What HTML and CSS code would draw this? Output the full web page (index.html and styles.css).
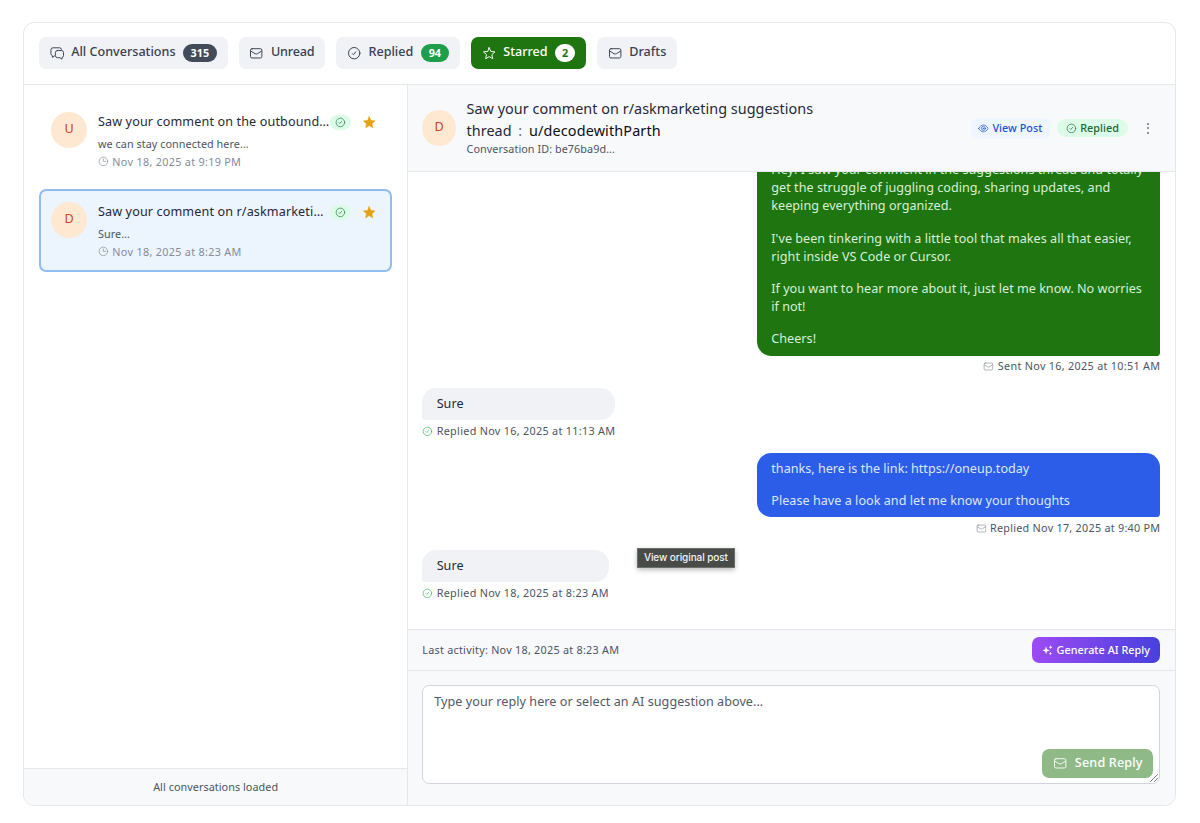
FILE: index.html
```html
<!DOCTYPE html>
<html lang="en">
<head>
<meta charset="utf-8">
<title>Conversations</title>
<link rel="stylesheet" href="styles.css">
</head>
<body>
<svg class="sprite" aria-hidden="true">
  <symbol id="mail" viewBox="0 0 24 24"><rect x="2.500" y="4.500" width="19" height="15.500" rx="2.500"/><path d="M3 8.500 10 12.800q2 1.200 4 0l7-4.300"/></symbol>
  <symbol id="check" viewBox="0 0 24 24"><circle cx="12" cy="12" r="9.500"/><path d="m9 12.700 1.700 1.800 4-4.800"/></symbol>
  <symbol id="clock" viewBox="0 0 24 24"><circle cx="12" cy="12" r="9.500"/><path d="M12 6.500V12h5"/></symbol>
  <symbol id="star" viewBox="0 0 24 24"><path d="m12 2.800 2.800 6.300 6.700.7-5 4.600 1.400 6.800-5.900-3.500-5.900 3.500 1.400-6.800-5-4.600 6.700-.7z"/></symbol>
  <symbol id="chat" viewBox="0 0 24 24"><path d="M19 6.500V6a3 3 0 0 0-3-3H5a3.500 3.500 0 0 0-3.500 3.500v6A3.500 3.500 0 0 0 4 16v3l3.500-2.500"/><path d="M12.500 7.500H19a3.500 3.500 0 0 1 3.500 3.500v5a3.500 3.500 0 0 1-2.500 3.300V22l-3.500-2.500h-4A3.500 3.500 0 0 1 9 16v-5a3.500 3.500 0 0 1 3.500-3.500z"/></symbol>
  <symbol id="eye" viewBox="0 0 24 24"><path d="M1.500 12C4 7 8 4.500 12 4.500S20 7 22.500 12C20 17 16 19.500 12 19.500S4 17 1.500 12z"/><circle cx="12" cy="12" r="4.500"/><circle cx="12" cy="12" r="1"/></symbol>
  <symbol id="spark" viewBox="0 0 24 24"><path d="M9 4.500 11 10l5.500 2-5.500 2-2 5.500L7 14l-5.500-2L7 10z"/><path d="m19 1.500 1 2.500 2.500 1-2.500 1-1 2.500L18 6l-2.500-1L18 4zM18.500 16l.9 2.100 2.100.9-2.100.9-.9 2.100-.9-2.100-2.100-.9 2.100-.9z"/></symbol>
</svg>
<main class="card">
  <nav class="tabs">
    <button class="tab"><svg class="icon"><use href="#chat"/></svg><span class="label">All Conversations</span><b class="count dark">315</b></button>
    <button class="tab tight"><svg class="icon"><use href="#mail"/></svg><span class="label">Unread</span></button>
    <button class="tab"><svg class="icon"><use href="#check"/></svg><span class="label">Replied</span><b class="count green">94</b></button>
    <button class="tab active"><svg class="icon"><use href="#star"/></svg><span class="label">Starred</span><b class="count white">2</b></button>
    <button class="tab"><svg class="icon"><use href="#mail"/></svg><span class="label">Drafts</span></button>
  </nav>
  <div class="body">
    <aside class="side">
      <div class="list">
        <article class="item">
          <div class="avatar">U</div>
          <div class="info">
            <div class="row"><h3>Saw your comment on the outbound…</h3><span class="ok"><svg><use href="#check"/></svg></span><svg class="fav"><use href="#star"/></svg></div>
            <p class="snippet">we can stay connected here...</p>
            <p class="date"><svg><use href="#clock"/></svg><span class="stamp">Nov 18, 2025 at 9:19 PM</span></p>
          </div>
        </article>
        <article class="item selected">
          <div class="avatar">D</div>
          <div class="info">
            <div class="row"><h3>Saw your comment on r/askmarketi…</h3><span class="ok"><svg><use href="#check"/></svg></span><svg class="fav"><use href="#star"/></svg></div>
            <p class="snippet">Sure...</p>
            <p class="date"><svg><use href="#clock"/></svg><span class="stamp">Nov 18, 2025 at 8:23 AM</span></p>
          </div>
        </article>
      </div>
      <footer class="loaded">All conversations loaded</footer>
    </aside>
    <section class="thread">
      <header class="head">
        <div class="avatar narrow">D</div>
        <div class="heading">
          <h2>Saw your comment on r/askmarketing suggestions<br>thread <i>:</i> <span class="user">u/decodewithParth</span></h2>
          <p>Conversation ID: be76ba9d...</p>
        </div>
        <div class="actions">
          <a class="pill view"><svg><use href="#eye"/></svg><span>View Post</span></a>
          <span class="pill replied"><svg><use href="#check"/></svg><span>Replied</span></span>
          <span class="more"><i></i><i></i><i></i></span>
        </div>
      </header>
      <div class="messages">
        <div class="msg out">
          <div class="bubble"><p>Hey! I saw your comment in the suggestions thread and totally<br>get the struggle of juggling coding, sharing updates, and<br>keeping everything organized.</p><p>I've been tinkering with a little tool that makes all that easier,<br>right inside VS Code or Cursor.</p><p class="dense">If you want to hear more about it, just let me know. No worries<br>if not!</p><p>Cheers!</p></div>
          <div class="meta"><svg><use href="#mail"/></svg><span class="stamp">Sent Nov 16, 2025 at 10:51 AM</span></div>
        </div>
        <div class="msg in">
          <div class="bubble">Sure</div>
          <div class="meta"><svg><use href="#check"/></svg><span class="stamp">Replied Nov 16, 2025 at 11:13 AM</span></div>
        </div>
        <div class="msg out blue">
          <div class="bubble"><p class="dense">thanks, here is the link: https://oneup.today</p><p>Please have a look and let me know your thoughts</p></div>
          <div class="meta"><svg><use href="#mail"/></svg><span class="stamp snug">Replied Nov 17, 2025 at 9:40 PM</span></div>
        </div>
        <div class="msg in">
          <div class="bubble">Sure</div>
          <div class="meta"><svg><use href="#check"/></svg><span class="stamp">Replied Nov 18, 2025 at 8:23 AM</span></div>
        </div>
        <div class="tooltip">View original post</div>
      </div>
      <div class="activity"><span class="last">Last activity: Nov 18, 2025 at 8:23 AM</span><button class="generate"><svg><use href="#spark"/></svg><span>Generate AI Reply</span></button></div>
      <div class="composer">
        <div class="field">Type your reply here or select an AI suggestion above...
          <button class="send"><svg><use href="#mail"/></svg><span>Send Reply</span></button>
          <svg class="grip" viewBox="0 0 8 8"><path d="M.5 7.500l7-7M4.500 7.500l3-3"/></svg>
        </div>
      </div>
    </section>
  </div>
</main>
</body>
</html>
```
FILE: styles.css
```css
* { box-sizing: border-box; margin: 0; padding: 0; }
body { width: 1200px; height: 823px; padding: 22px 24.200px 17px 23.400px; background: #fff; overflow: hidden; font: 12.6px/18px "Noto Sans", "Open Sans", sans-serif; color: #1f2937; }
svg { fill: none; stroke: currentColor; stroke-width: 1.5; stroke-linecap: round; stroke-linejoin: round; flex: none; display: block; width: 10.8px; height: 10.8px; }
.sprite { position: absolute; width: 0; height: 0; }
button { font: inherit; border: 0; white-space: nowrap; }
h2, h3 { font-weight: 400; }
.card { height: 784px; display: flex; flex-direction: column; border: 1px solid #e5e7eb; border-radius: 11px; overflow: hidden; }
.tabs { height: 62px; flex: none; display: flex; gap: 10.800px; padding: 14.400px; border-bottom: 1px solid #e5e7eb; }
.tab { height: 32px; display: flex; align-items: center; padding: 0 10.800px; border-radius: 7.200px; background: #f1f2f6; color: #374151; font-weight: 500; }
.tab .icon { width: 14.400px; height: 14.400px; margin-right: 7.200px; stroke-width: 1.6; }
.label { padding-bottom: 2px; }
.tight { letter-spacing: -.17px; }
.tab.active { background: #1f7611; color: #fff; }
.count { margin-left: 7.200px; height: 18px; padding: 0 7.900px; border-radius: 9px; font-size: 10.800px; font-weight: 700; line-height: 17px; color: #fff; }
.dark { background: #414b5a; }
.green { background: #1f9d49; padding: 0 8.200px; }
.count.white { background: #fff; color: #1f7611; padding: 0 7.200px; }
.body { flex: 1; min-height: 0; display: flex; }
.side { width: 383.500px; flex: none; display: flex; flex-direction: column; border-right: 1px solid #e5e7eb; }
.list { flex: 1; padding: 14.400px 15px 0 14.400px; display: flex; flex-direction: column; gap: 7.200px; }
.item { height: 82.800px; flex: none; display: flex; gap: 10.800px; padding: 10.400px; border: 2px solid transparent; border-radius: 7.200px; }
.selected { background: #ecf4fe; border-color: #8fbdf3; }
.avatar { width: 36px; height: 36px; flex: none; border-radius: 50%; background: #ffe8d2; color: #d0401c; display: grid; place-items: center; padding-bottom: 1px; }
.narrow { width: 33.500px; padding-bottom: 2px; }
.info { flex: 1; min-width: 0; }
.row { display: flex; align-items: center; height: 21px; }
.row h3 { font-size: 12.600px; letter-spacing: .125px; white-space: nowrap; flex: 0 0 232px; padding-bottom: .400px; }
.ok { width: 21px; height: 15px; border-radius: 8px; background: #dcfce7; color: #1c7a40; display: grid; place-items: center; }
.fav { width: 14.400px; height: 14.400px; margin-left: 11px; color: #e6a10e; fill: #e6a10e; stroke-width: 1; }
.snippet { font-size: 10.800px; letter-spacing: .06px; color: #4b5563; height: 18px; margin-top: 2.500px; }
.date { font-size: 10.800px; color: #858c99; height: 18px; display: flex; align-items: center; gap: 3.600px; margin-top: -.500px; }
.stamp { letter-spacing: .31px; }
.snug { letter-spacing: .266px; }
.loaded { height: 37px; border-top: 1px solid #e5e7eb; background: #f8f9fb; display: grid; place-items: center; font-size: 10.800px; letter-spacing: .06px; color: #4b5563; }
.thread { flex: 1; min-width: 0; display: flex; flex-direction: column; }
.head { height: 87px; flex: none; display: flex; align-items: center; padding: 0 14.400px; background: #f8f9fb; border-bottom: 1px solid #e5e7eb; }
.heading { flex: 1; margin-left: 10.800px; padding-bottom: 1px; }
.heading h2 { font-size: 14.400px; line-height: 21.600px; letter-spacing: .033px; }
.heading i { font-style: normal; color: #6b7280; margin: 0 3px; }
.user { color: #0b0f17; letter-spacing: .14px; }
.heading p { font-size: 10.800px; line-height: 14.400px; letter-spacing: .07px; color: #4b5563; margin-top: 1px; }
.actions { display: flex; align-items: center; margin-right: 5px; }
.pill { height: 18px; display: flex; align-items: center; gap: 3.600px; padding: 0 9px; border-radius: 9px; font-size: 10.800px; font-weight: 500; letter-spacing: .05px; }
.view { height: 21px; border-radius: 7px; padding: 0 7.200px; background: #eff6ff; color: #2450d8; margin-right: 7.200px; }
.replied { background: #dcfce7; color: #17663a; }
.pill span { padding-bottom: 1px; }
.more { width: 14.400px; margin-left: 13px; display: flex; flex-direction: column; align-items: center; gap: 2.500px; }
.more i { width: 2px; height: 2px; border-radius: 1px; background: #6b7280; }
.messages { flex: 1; min-height: 0; overflow: hidden; position: relative; display: flex; flex-direction: column; justify-content: flex-end; gap: 14.400px; padding: 0 14.400px 28.800px; }
.msg { flex: none; display: flex; flex-direction: column; align-self: flex-start; }
.out { align-self: flex-end; width: 403.500px; }
.bubble { padding: 7.200px 14.400px; border-radius: 14.400px 14.400px 14.400px 3.600px; background: #f1f2f6; white-space: nowrap; letter-spacing: .028px; }
.dense { letter-spacing: 0; }
.out .bubble { border-radius: 14.400px 14.400px 3.600px 14.400px; background: #1f7611; color: #d9efd6; }
.blue .bubble { background: #2b5de8; color: #dbe7fd; }
.bubble p + p { margin-top: 14.400px; }
.meta { margin-top: 3.600px; height: 14.400px; display: flex; align-items: center; gap: 3.600px; font-size: 10.800px; color: #4b5563; white-space: nowrap; }
.out .meta { justify-content: flex-end; }
.out .meta svg { color: #8b919d; }
.in .meta svg { color: #35b864; }
.tooltip { position: absolute; left: 229px; top: 376px; width: 98px; height: 20px; border: 1px solid #6c706c; background: #484b48; color: #f3f3f3; font: 500 10px/17px Inter, sans-serif; letter-spacing: -.08px; text-align: center; box-shadow: 0 2px 5px #0004; white-space: nowrap; }
.activity { height: 42px; flex: none; display: flex; align-items: center; justify-content: space-between; padding: 0 14.400px; background: #f8f9fb; border-top: 1px solid #e5e7eb; border-bottom: 1px solid #e5e7eb; font-size: 10.800px; color: #4b5563; }
.last { letter-spacing: .264px; }
.generate { height: 25.200px; display: flex; align-items: center; gap: 3.600px; padding: 0 10.400px; border-radius: 7.200px; background: linear-gradient(90deg, #9d4bf5, #4840dc); color: #fff; font-weight: 500; letter-spacing: .046px; }
.generate svg { fill: currentColor; stroke-width: .6; }
.composer { height: 134px; flex: none; padding: 14.400px; background: #f8f9fb; }
.field { position: relative; height: 99px; padding: 6.500px 11px; border: 1px solid #d1d5db; border-radius: 7.200px; background: #fff; color: #525966; letter-spacing: .046px; }
.send { position: absolute; right: 6px; bottom: 5.500px; height: 29px; display: flex; align-items: center; gap: 7.200px; padding: 0 10.800px; border-radius: 7.200px; background: #8fba88; color: #fff; font-weight: 500; letter-spacing: .16px; }
.send svg { width: 14.400px; height: 14.400px; }
.grip { position: absolute; right: 1px; bottom: 1px; width: 8px; height: 8px; stroke-width: .8; color: #555; }
```
